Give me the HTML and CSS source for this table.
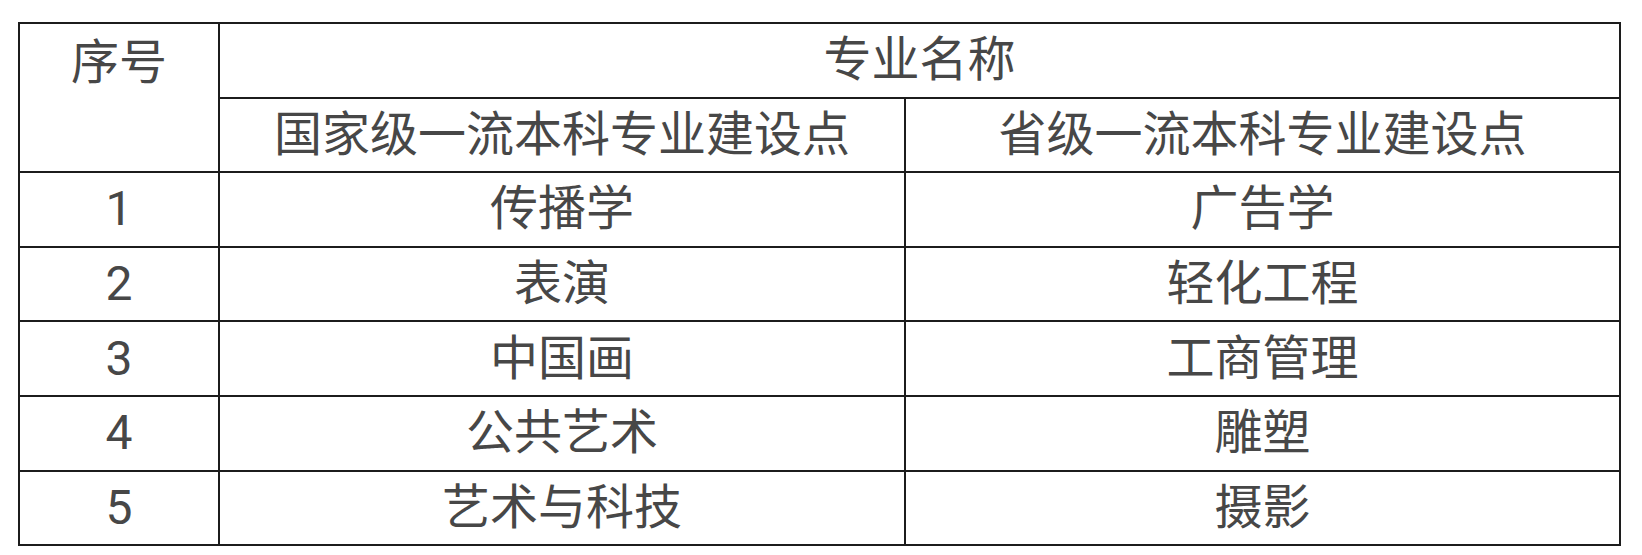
FILE: index.html
```html
<!DOCTYPE html>
<html lang="zh">
<head>
<meta charset="utf-8">
<title>一流本科专业建设点</title>
<link rel="stylesheet" href="styles.css">
</head>
<body>
<table class="majors">
  <colgroup>
    <col class="c-num">
    <col class="c-nat">
    <col class="c-prov">
  </colgroup>
  <tr>
    <td class="cell idx-head" rowspan="2">序号</td>
    <td class="cell" colspan="2">专业名称</td>
  </tr>
  <tr>
    <td class="cell">国家级一流本科专业建设点</td>
    <td class="cell">省级一流本科专业建设点</td>
  </tr>
  <tr><td class="cell">1</td><td class="cell">传播学</td><td class="cell">广告学</td></tr>
  <tr><td class="cell">2</td><td class="cell">表演</td><td class="cell">轻化工程</td></tr>
  <tr><td class="cell">3</td><td class="cell">中国画</td><td class="cell">工商管理</td></tr>
  <tr><td class="cell">4</td><td class="cell">公共艺术</td><td class="cell">雕塑</td></tr>
  <tr><td class="cell">5</td><td class="cell">艺术与科技</td><td class="cell">摄影</td></tr>
</table>
</body>
</html>
```
FILE: styles.css
```css
html, body {
  margin: 0;
  padding: 0;
  background: #ffffff;
}

body {
  padding: 22px 0 0 18px;
}

.majors {
  border-collapse: collapse;
  table-layout: fixed;
  width: 1603px;
  font-family: Roboto, "Noto Sans CJK SC", sans-serif;
  font-size: 48px;
  color: #474747;
}

.c-num { width: 200px; }
.c-nat { width: 686px; }
.c-prov { width: 715px; }

.cell {
  border: 2px solid #1c1c1c;
  height: 74.6px;
  padding: 0;
  text-align: center;
  vertical-align: middle;
  line-height: 1;
  box-sizing: border-box;
}

.idx-head {
  vertical-align: top;
  padding-top: 15px;
}
```
